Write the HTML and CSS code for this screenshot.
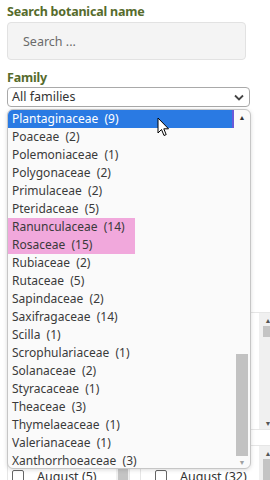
FILE: index.html
```html
<!DOCTYPE html>
<html lang="en">
<head>
    <meta charset="UTF-8">
    <meta name="viewport" content="width=device-width, initial-scale=1.0">
    <title>Plant search</title>
    <link rel="stylesheet" href="styles.css">
</head>
<body>

<div class="page">
    <label class="field-label">Search botanical name</label>
    <input class="search-box" type="text" placeholder="Search ...">

    <label class="field-label family-label">Family</label>
    <div class="select-box">
        <span>All families</span>
        <svg class="chevron" width="10" height="7" viewBox="0 0 10 7"><path d="M1 1.5 L5 5.5 L9 1.5" fill="none" stroke="#444" stroke-width="1.8"/></svg>
    </div>

    <!-- filtros por mes (ficam por baixo da lista aberta) -->
    <div class="months">
        <div class="month-col">
            <div class="month-box tall">
                <div class="month-rows"></div>
                <div class="fake-bar"><span class="arrow">&#9650;</span><span class="thumb top"></span><span class="spacer"></span><span class="arrow">&#9660;</span></div>
            </div>
            <div class="month-box">
                <div class="month-rows">
                    <div class="month-row"><span class="check"></span>August (5)</div>
                </div>
                <div class="fake-bar"><span class="arrow">&#9650;</span><span class="thumb"></span></div>
            </div>
        </div>
        <div class="month-col">
            <div class="month-box tall">
                <div class="month-rows"></div>
                <div class="fake-bar"><span class="arrow">&#9650;</span><span class="thumb top"></span><span class="spacer"></span><span class="arrow">&#9660;</span></div>
            </div>
            <div class="month-box">
                <div class="month-rows">
                    <div class="month-row"><span class="check"></span>August (32)</div>
                </div>
                <div class="fake-bar"><span class="arrow">&#9650;</span><span class="thumb"></span></div>
            </div>
        </div>
    </div>

    <!-- lista aberta do select -->
    <div class="dropdown">
        <ul class="options">
            <li class="selected">Plantaginaceae&nbsp; (9)</li>
            <li>Poaceae&nbsp; (2)</li>
            <li>Polemoniaceae&nbsp; (1)</li>
            <li>Polygonaceae&nbsp; (2)</li>
            <li>Primulaceae&nbsp; (2)</li>
            <li>Pteridaceae&nbsp; (5)</li>
            <li class="marked">Ranunculaceae&nbsp; (14)</li>
            <li class="marked">Rosaceae&nbsp; (15)</li>
            <li>Rubiaceae&nbsp; (2)</li>
            <li>Rutaceae&nbsp; (5)</li>
            <li>Sapindaceae&nbsp; (2)</li>
            <li>Saxifragaceae&nbsp; (14)</li>
            <li>Scilla&nbsp; (1)</li>
            <li>Scrophulariaceae&nbsp; (1)</li>
            <li>Solanaceae&nbsp; (2)</li>
            <li>Styracaceae&nbsp; (1)</li>
            <li>Theaceae&nbsp; (3)</li>
            <li>Thymelaeaceae&nbsp; (1)</li>
            <li>Valerianaceae&nbsp; (1)</li>
            <li>Xanthorrhoeaceae&nbsp; (3)</li>
        </ul>
        <div class="list-bar">
            <span class="bar-arrow up">&#9650;</span>
            <span class="bar-thumb"></span>
            <span class="bar-arrow down">&#9660;</span>
        </div>
    </div>

    <svg class="cursor" width="13" height="20" viewBox="0 0 13 20"><path d="M1 1 L1 16 L4.5 12.5 L7 18.5 L9.2 17.6 L6.8 11.8 L11.5 11.8 Z" fill="#fff" stroke="#000" stroke-width="1" stroke-linejoin="round"/></svg>
</div>

</body>
</html>
```

FILE: styles.css
```css
/* Estilos da pagina */
html, body {
    margin: 0;
    overflow: hidden;
}
body {
    background: #fff;
    font-family: "Noto Sans", "Open Sans", sans-serif;
    font-size: 12px;
    color: #333;
}
.page {
    position: relative;
    padding: 3px 0 0 7px;
    height: 477px;
    overflow: hidden;
}
.field-label {
    display: block;
    font-weight: bold;
    font-size: 12.5px;
    letter-spacing: -0.2px;
    line-height: 18px;
    color: #566b2c;
}
.search-box {
    display: block;
    box-sizing: border-box;
    width: 239px;
    height: 38px;
    margin-top: 1px;
    padding: 0 0 0 15px;
    border: 1px solid #e2e2e2;
    border-radius: 4px;
    background: #f4f4f4;
    font-family: inherit;
    font-size: 12.5px;
}
.search-box::placeholder {
    color: #6b6b6b;
}
.family-label {
    margin-top: 9px;
}
.select-box {
    box-sizing: border-box;
    width: 243px;
    height: 20px;
    padding: 0 0 0 4px;
    border: 1px solid #a9a9a9;
    border-radius: 4px;
    display: flex;
    align-items: center;
    justify-content: space-between;
    font-size: 12.5px;
    line-height: 18px;
    color: #333;
}
.chevron {
    margin-right: 5px;
}

/* meses */
.months {
    margin-top: 205px;
    display: grid;
    grid-template-columns: 123px 140px;
    column-gap: 10px;
}
.month-box {
    display: flex;
    height: 116px;
    border: 1px solid #e6e6e6;
    background: #fff;
    overflow: hidden;
}
.month-box + .month-box {
    margin-top: 15px;
    height: 60px;
}
.month-rows {
    flex: 1;
    padding: 21px 0 0 4px;
}
.month-col + .month-col .month-rows {
    padding-left: 14px;
}
.month-row {
    display: flex;
    align-items: center;
    height: 18px;
    font-size: 12.5px;
    color: #333;
    white-space: nowrap;
}
.check {
    box-sizing: border-box;
    width: 12px;
    height: 12px;
    margin-right: 13px;
    border: 1px solid #666;
    border-radius: 2px;
    background: #fff;
}
.fake-bar {
    width: 13px;
    display: flex;
    flex-direction: column;
    align-items: center;
    background: #f0f0f0;
}
.month-col + .month-col .fake-bar {
    width: 18px;
    margin-right: 2px;
}
.arrow {
    font-size: 7px;
    line-height: 10px;
    color: #555;
    margin-top: 3px;
}
.thumb {
    width: 10px;
    flex: 1;
    background: #c4c4c4;
}
.thumb.top {
    flex: 0 0 11px;
}
.spacer {
    flex: 1;
}

/* lista aberta */
.dropdown {
    position: absolute;
    top: 109px;
    left: 7px;
    box-sizing: border-box;
    width: 244px;
    height: 360px;
    display: flex;
    border: 1px solid #c6c6c6;
    border-radius: 6px;
    background: #fafafa;
    box-shadow: 0 1px 4px rgba(0, 0, 0, 0.15);
    overflow: hidden;
}
.options {
    flex: 1;
    margin: 0;
    padding: 0;
    list-style: none;
}
.options li {
    height: 18px;
    line-height: 18px;
    padding-left: 4px;
    font-size: 12px;
    color: #3a3a3a;
    white-space: nowrap;
}
.options li.selected {
    background: #2a7ae3;
    color: #fff;
    border-right: 2px solid #6a5ad8;
}
.options li.marked {
    background: linear-gradient(to right, #f1a8dc 127px, transparent 127px);
}
.list-bar {
    width: 16px;
    display: flex;
    flex-direction: column;
    align-items: center;
}
.bar-arrow {
    font-size: 7px;
    line-height: 10px;
}
.bar-arrow.up {
    margin-top: 3px;
    color: #333;
}
.bar-arrow.down {
    margin-top: 2px;
    color: #a0a0a0;
}
.bar-thumb {
    width: 12px;
    height: 102px;
    margin-top: auto;
    background: #c2c2c2;
}
.cursor {
    position: absolute;
    top: 117px;
    left: 157px;
}
```
